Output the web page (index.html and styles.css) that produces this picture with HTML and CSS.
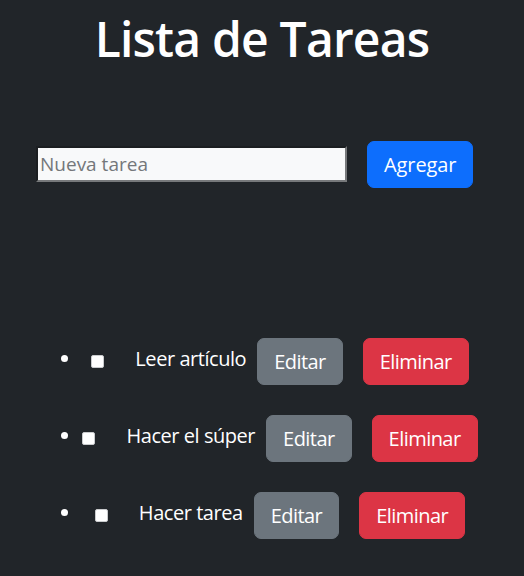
FILE: index.html
```html
<!DOCTYPE html>
<html lang="es">
<head>
<meta charset="utf-8">
<title>Lista de Tareas</title>
<link rel="stylesheet" href="styles.css">
</head>
<body>
<h1 class="title">Lista de Tareas</h1>
<form class="add-form">
<input class="task-input" type="text" placeholder="Nueva tarea"><button type="button" class="btn btn-primary">Agregar</button>
</form>
<ul class="task-list">
<li class="task-item"><input type="checkbox" class="task-check"><span class="task-text">Leer artículo</span><button type="button" class="btn btn-secondary btn-edit">Editar</button><button type="button" class="btn btn-danger">Eliminar</button></li>
<li class="task-item"><input type="checkbox" class="task-check"><span class="task-text">Hacer el súper</span><button type="button" class="btn btn-secondary btn-edit">Editar</button><button type="button" class="btn btn-danger">Eliminar</button></li>
<li class="task-item"><input type="checkbox" class="task-check"><span class="task-text">Hacer tarea</span><button type="button" class="btn btn-secondary btn-edit">Editar</button><button type="button" class="btn btn-danger">Eliminar</button></li>
</ul>
</body>
</html>
```
FILE: styles.css
```css
html, body {
  margin: 0;
  padding: 0;
  background: #212529;
}
body {
  color: #ffffff;
  font-family: "Open Sans", "DejaVu Sans", sans-serif;
  font-size: 20px;
  line-height: 1.5;
}
.title {
  margin: 10px 0 0;
  font-size: 48px;
  font-weight: 600;
  line-height: 57.6px;
  letter-spacing: -0.8px;
  text-align: center;
}
.add-form {
  display: flex;
  align-items: center;
  gap: 20px;
  margin: 73px 0 0;
  padding-left: 36px;
  height: 47px;
}
.task-input {
  box-sizing: border-box;
  width: 311px;
  height: 36px;
  margin: 0;
  padding: 1px 2px;
  font-family: inherit;
  font-size: 19px;
  color: #212529;
  background: #f8f9fa;
  border-style: solid;
  border-width: 2px;
  border-color: #1b1e21 #77797b #77797b #1b1e21;
  outline: none;
}
.task-input::placeholder {
  color: #74777a;
}
.btn {
  box-sizing: border-box;
  display: inline-block;
  height: 47px;
  margin: 0;
  padding: 0 16px;
  font-family: inherit;
  font-size: 20px;
  line-height: 45px;
  letter-spacing: -0.55px;
  color: #ffffff;
  border: 1px solid transparent;
  border-radius: 7px;
  vertical-align: middle;
  cursor: pointer;
}
.btn-primary { background: #0d6efd; border-color: #0d6efd; letter-spacing: -0.1px; }
.btn-secondary { background: #6c757d; border-color: #6c757d; }
.btn-danger { background: #dc3545; border-color: #dc3545; }
.task-list {
  margin: 150px 0 0;
  padding: 0 46px 0 82px;
}
.task-item {
  text-align: center;
  white-space: nowrap;
  margin-bottom: 30px;
}
.task-check {
  appearance: none;
  box-sizing: border-box;
  width: 13px;
  height: 13px;
  margin: 0 31px 0 0;
  background: #ffffff;
  border: 1px solid #c9cbcd;
  border-radius: 2px;
  vertical-align: middle;
}
.task-text {
  margin-right: 11px;
  letter-spacing: -0.45px;
}
.btn-edit {
  margin-right: 20px;
}
```
